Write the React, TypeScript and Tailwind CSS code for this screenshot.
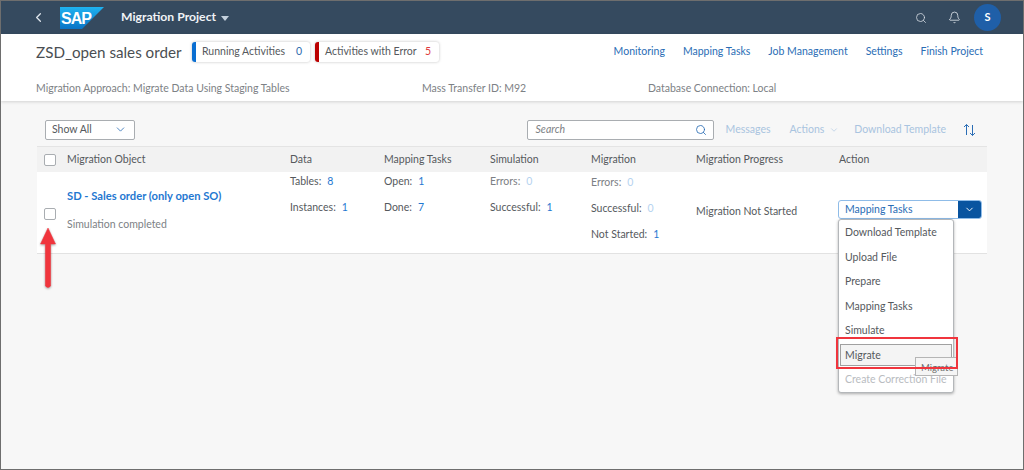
import { Bell, ChevronDown, ChevronLeft, Search } from "lucide-react";

const menuItems = ["Download Template", "Upload File", "Prepare", "Mapping Tasks", "Simulate"];

const Stat = ({ label, value, muted, faded }: { label: string; value: string; muted?: boolean; faded?: boolean }) => (
  <div className="h-4 leading-4 whitespace-nowrap">
    <span className={muted ? "text-[#7c8084]" : ""}>{label}:</span>
    <span className={faded ? "ml-[6px] text-[#b5d3f0]" : "ml-[6px] text-[#1f78d1]"}>{value}</span>
  </div>
);

const SapLogo = () => (
  <svg width="44" height="22" viewBox="0 0 44 22">
    <defs>
      <linearGradient id="sap" x1="0" y1="0" x2="0" y2="1">
        <stop offset="0" stopColor="#1fb2f0" />
        <stop offset="1" stopColor="#0a74c6" />
      </linearGradient>
    </defs>
    <polygon points="0,0 44,0 22,22 0,22" fill="url(#sap)" />
    <text x="1" y="17" fill="#fff" fontSize="16" fontWeight="700" className="font-['Liberation_Sans'] tracking-[-1px]">
      SAP
    </text>
  </svg>
);

const Chip = ({ label, value, bar, color, width }: { label: string; value: string; bar: string; color: string; width: string }) => (
  <div className={`flex h-[20px] items-center rounded-[3px] bg-white shadow-[0_0_3px_rgba(0,0,0,0.25)] ${width}`}>
    <div className={`h-full w-[4px] rounded-l-[3px] ${bar}`} />
    <span className="ml-[6px] flex-1 text-[#55595d]">{label}</span>
    <span className={`mr-[8px] ${color}`}>{value}</span>
  </div>
);

const Checkbox = () => <div className="h-[12px] w-[12px] rounded-[2px] border border-[#a9adb1] bg-white" />;

export default function App() {
  return (
    <div className="relative flex h-[470px] w-[1024px] flex-col overflow-hidden border border-[#6e6e6e] bg-[#f7f7f7] font-['Lato',sans-serif] text-[10.5px] text-[#55595d]">
      {/* Shell bar */}
      <header className="flex h-[33px] shrink-0 items-center bg-[#354a5f] text-white">
        <ChevronLeft className="ml-[30px] h-[15px] w-[15px] text-[#dfe6ed]" strokeWidth={2} />
        <div className="ml-[14px] flex"><SapLogo /></div>
        <span className="ml-[17px] text-[12.2px] font-bold text-[#f0f3f6]">Migration Project</span>
        <span className="ml-[5px] mt-[1px] h-0 w-0 border-x-[4px] border-t-[5px] border-x-transparent border-t-[#c4d0dc]" />
        <Search className="ml-auto h-[12px] w-[12px] text-[#d5dce3]" strokeWidth={1.6} />
        <Bell className="ml-[21px] h-[13px] w-[13px] text-[#d5dce3]" strokeWidth={1.6} />
        <div className="ml-[13px] mr-[22px] flex h-[27px] w-[27px] items-center justify-center rounded-full bg-[#1f5fa8] text-[11px] font-bold">S</div>
      </header>

      {/* Project header */}
      <section className="h-[67px] shrink-0 bg-white px-[35px] shadow-[0_1px_3px_rgba(0,0,0,0.15)]">
        <div className="flex items-center pt-[8px]">
          <h1 className="w-[156px] text-[15.2px] leading-[20px] text-[#4a4e52]">ZSD_open sales order</h1>
          <div className="flex gap-[5px]">
            <Chip label="Running Activities" value="0" bar="bg-[#0a6ed1]" color="text-[#2f6bb0]" width="w-[118px]" />
            <Chip label="Activities with Error" value="5" bar="bg-[#bb0000]" color="text-[#e03b3b]" width="w-[124px]" />
          </div>
          <nav className="ml-auto mr-[5px] flex gap-[18px] text-[#2a6db5]">
            <span>Monitoring</span>
            <span>Mapping Tasks</span>
            <span>Job Management</span>
            <span>Settings</span>
            <span>Finish Project</span>
          </nav>
        </div>
        <div className="mt-[19px] flex text-[#7d8185]">
          <span className="w-[386px]">Migration Approach: Migrate Data Using Staging Tables</span>
          <span className="w-[226px]">Mass Transfer ID: M92</span>
          <span>Database Connection: Local</span>
        </div>
      </section>

      {/* Worklist */}
      <main className="ml-[36px] mr-[36px] flex-1 pt-[18px]">
        <div className="flex h-[21px] items-center pl-[8px] pr-[11px]">
          <div className="flex h-[20px] w-[90px] items-center justify-between rounded-[2px] border border-[#a9adb1] bg-white pl-[6px] pr-[7px]">
            <span>Show All</span>
            <ChevronDown className="h-[13px] w-[13px] text-[#2a6db5]" strokeWidth={1.5} />
          </div>
          <div className="ml-auto flex h-[20px] w-[187px] items-center justify-between rounded-[2px] border border-[#a9adb1] bg-white pl-[8px] pr-[6px]">
            <span className="italic text-[#7d8185]">Search</span>
            <Search className="h-[12px] w-[12px] text-[#2a6db5]" strokeWidth={1.7} />
          </div>
          <span className="ml-[12px] text-[#a9c4e0]">Messages</span>
          <span className="ml-[19px] text-[#a9c4e0]">Actions</span>
          <ChevronDown className="ml-[5px] h-[10px] w-[10px] text-[#a9c4e0]" strokeWidth={1.5} />
          <span className="ml-[15px] text-[#a9c4e0]">Download Template</span>
          <svg className="ml-[17px]" width="13" height="14" viewBox="0 0 13 14" fill="none" stroke="#2a6db5" strokeWidth="1">
            <path d="M3.5 12V1.5M1 4l2.5-2.5L6 4M9.5 2v10.5M7 10l2.5 2.5L12 10" />
          </svg>
        </div>

        <div className="mt-[6px] grid h-[26px] grid-cols-[30px_223px_94px_106px_101px_105px_143px_1fr] items-center border-t border-[#e4e4e4] bg-[#f2f2f2]">
          <div className="pl-[7px]"><Checkbox /></div>
          <span>Migration Object</span>
          <span>Data</span>
          <span>Mapping Tasks</span>
          <span>Simulation</span>
          <span>Migration</span>
          <span>Migration Progress</span>
          <span>Action</span>
        </div>

        <div className="grid h-[82px] grid-cols-[30px_223px_94px_106px_101px_105px_143px_1fr] border-b border-[#e2e2e2] bg-white">
          <div className="pl-[7px] pt-[36px]"><Checkbox /></div>
          <div className="pt-[15.5px]">
            <div className="h-4 text-[11.2px] font-bold leading-4 text-[#1f78d1]">SD - Sales order (only open SO)</div>
            <div className="mt-[12px] leading-4 text-[#7d8185]">Simulation completed</div>
          </div>
          <div className="flex flex-col gap-[10px] pt-[1px]">
            <Stat label="Tables" value="8" />
            <Stat label="Instances" value="1" />
          </div>
          <div className="flex flex-col gap-[10px] pt-[1px]">
            <Stat label="Open" value="1" />
            <Stat label="Done" value="7" />
          </div>
          <div className="flex flex-col gap-[10px] pt-[1px]">
            <Stat label="Errors" value="0" muted faded />
            <Stat label="Successful" value="1" />
          </div>
          <div className="flex flex-col gap-[10px] pt-[2px]">
            <Stat label="Errors" value="0" muted faded />
            <Stat label="Successful" value="0" faded />
            <Stat label="Not Started" value="1" />
          </div>
          <div className="pt-[32px]">Migration Not Started</div>
          <div className="pt-[28px]">
            <div className="-ml-px flex h-[19px] w-[144px] rounded-[3px] border border-[#8fbce8] bg-white">
              <span className="flex-1 pl-[6px] leading-[17px] text-[#2a6db5]">Mapping Tasks</span>
              <div className="flex w-[23px] items-center justify-center rounded-r-[2px] bg-[#0854a0]">
                <ChevronDown className="h-[11px] w-[11px] text-white" strokeWidth={2} />
              </div>
            </div>
          </div>
        </div>
      </main>

      {/* Open action menu */}
      <div className="absolute left-[837px] top-[218px] h-[174px] w-[116px] rounded-[3px] border border-[#b4b7ba] bg-white shadow-[0_1px_3px_rgba(0,0,0,0.3)]">
        {menuItems.map((item) => (
          <div key={item} className="h-[24.5px] pl-[6px] leading-[24.5px]">{item}</div>
        ))}
        <div className="mx-[1px] mt-[1px] h-[22px] border border-[#a0a0a0] bg-[#f4f4f4] pl-[4px] leading-[20px]">Migrate</div>
        <div className="mt-[1.5px] h-[24.5px] pl-[6px] leading-[24.5px] text-[#b9bcbf]">Create Correction File</div>
      </div>

      {/* Annotations */}
      <div className="absolute left-[914px] top-[356px] h-[19px] w-[43px] border border-[#b5b5b5] bg-[#f5f5f5] pl-[5px] text-[9.5px] leading-[19px] text-[#6e6e6e]">Migrate</div>
      <div className="absolute left-[835px] top-[336px] h-[32px] w-[122px] border-2 border-[#f0353d]" />
      <svg className="absolute left-[37px] top-[225px]" width="20" height="66" viewBox="0 0 20 66">
        <path d="M10 2 L17.5 18 H12.6 V60 Q10 63 7.4 60 V18 H2.5 Z" fill="#f0353d" stroke="#f0353d" strokeWidth="0.5" strokeLinejoin="round" style={{ filter: "drop-shadow(0 1px 1px rgba(0,0,0,0.35))" }} />
      </svg>
    </div>
  );
}
